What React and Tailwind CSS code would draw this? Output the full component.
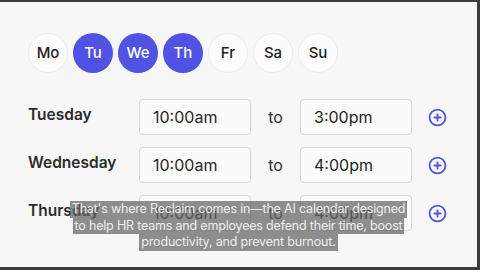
import React from 'react';
import { CirclePlus } from 'lucide-react';

const DAYS = [
  { d: 'Mo', on: false },
  { d: 'Tu', on: true },
  { d: 'We', on: true },
  { d: 'Th', on: true },
  { d: 'Fr', on: false },
  { d: 'Sa', on: false },
  { d: 'Su', on: false },
];

const ROWS = [
  { day: 'Tuesday', from: '10:00am', to: '3:00pm' },
  { day: 'Wednesday', from: '10:00am', to: '4:00pm' },
  { day: 'Thursday', from: '10:00am', to: '4:00pm' },
];

const font = { fontFamily: 'Inter, "Noto Sans", sans-serif' };

export default function App() {
  return (
    <div className="relative w-[480px] h-[270px] overflow-hidden bg-[#f7f7f7] border-t-2 border-b-[3px] border-r-[3px] border-[#3b3b3b]" style={font}>
      <div className="flex gap-[5px] pl-[28px] pt-[31px]">
        {DAYS.map(x => (
          <div
            key={x.d}
            className={x.on
              ? 'w-[40px] h-[40px] rounded-full bg-[#4f52e2] text-white flex items-center justify-center text-[15px] font-medium'
              : 'w-[40px] h-[40px] rounded-full bg-[#fcfcfc] border border-[#ececec] text-[#222] flex items-center justify-center text-[15px] font-medium'}
          >
            {x.d}
          </div>
        ))}
      </div>

      <div className="flex flex-col gap-[12px] pl-[28px] mt-[26px]">
        {ROWS.map(r => (
          <div key={r.day} className="flex items-center">
            <div className="w-[111px] pb-[4px] text-[15.5px] font-semibold text-[#2b2b2b]">{r.day}</div>
            <div className="w-[112px] h-[36px] rounded-[4px] border border-[#d6d6d6] bg-[#fbfbfb] flex items-center pl-[13px] text-[16px] text-[#262626]">{r.from}</div>
            <div className="w-[49px] text-center text-[16px] text-[#303030]">to</div>
            <div className="w-[112px] h-[36px] rounded-[4px] border border-[#d6d6d6] bg-[#fbfbfb] flex items-center pl-[13px] text-[16px] text-[#262626]">{r.to}</div>
            <CirclePlus size={19} strokeWidth={2.3} className="ml-[16px] text-[#5054e0]" />
          </div>
        ))}
      </div>

      <div className="absolute left-0 right-0 top-[199px] flex flex-col items-center text-[12.5px] leading-[16.5px] tracking-[-0.015em] text-[#ededed]">
        <span className="bg-[rgba(100,100,100,0.72)] px-[2px]">That's where Reclaim comes in—the AI calendar designed</span>
        <span className="bg-[rgba(100,100,100,0.72)] px-[2px]">to help HR teams and employees defend their time, boost</span>
        <span className="bg-[rgba(100,100,100,0.72)] px-[2px]">productivity, and prevent burnout.</span>
      </div>
    </div>
  );
}
